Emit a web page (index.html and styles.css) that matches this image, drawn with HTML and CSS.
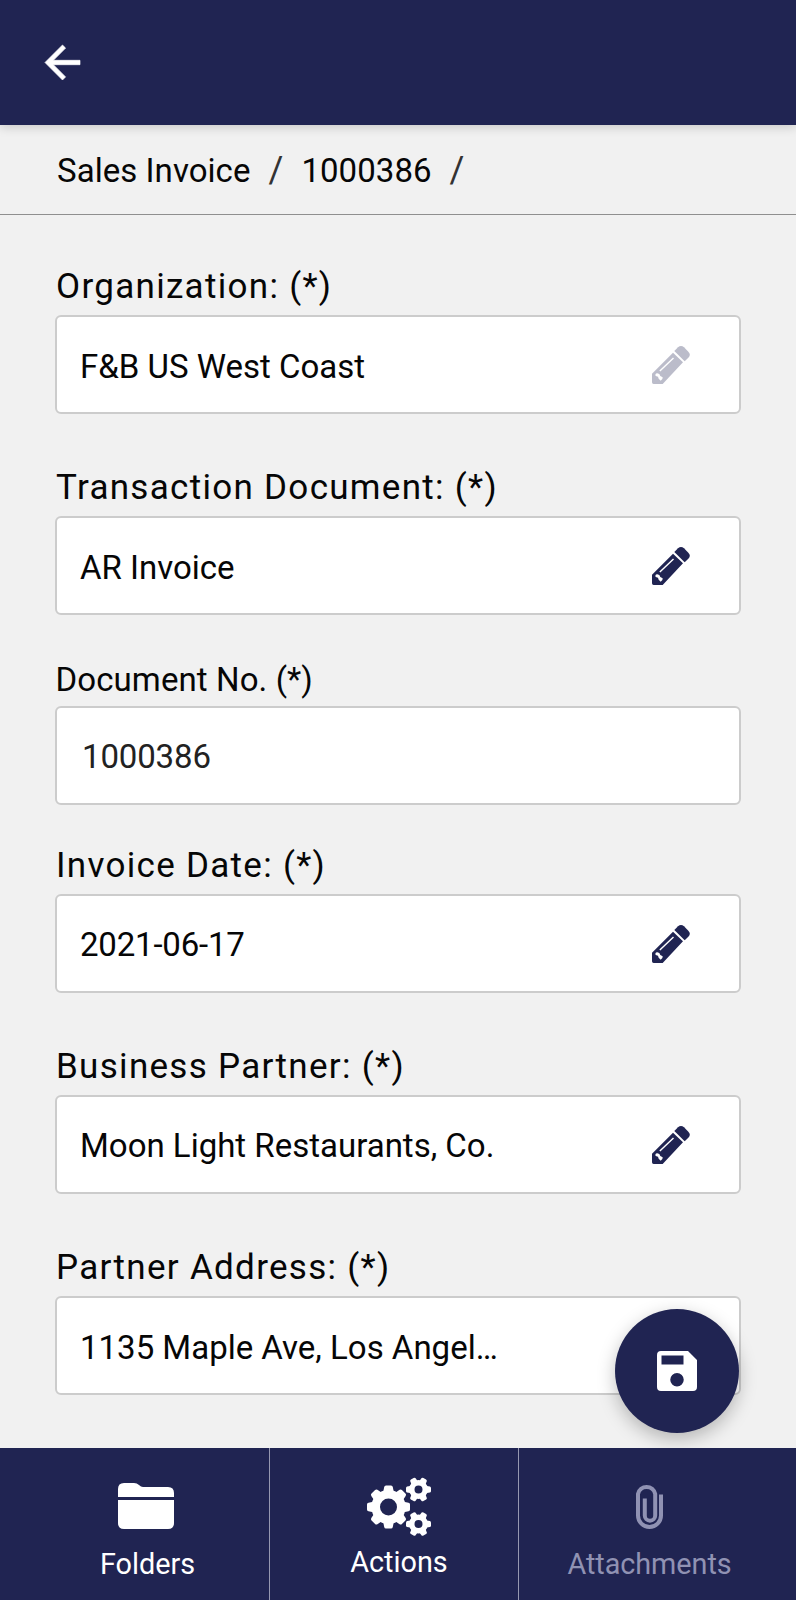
FILE: index.html
```html
<!DOCTYPE html>
<html lang="en">
<head>
<meta charset="utf-8">
<title>Sales Invoice</title>
<link rel="stylesheet" href="styles.css">
</head>
<body>
<svg width="0" height="0" class="defs">
  <symbol id="pencil" viewBox="0 0 114 114">
    <path fill="currentColor" fill-rule="evenodd" d="M0 83L63 20L93 49L32 114H5Q0 114 0 109ZM22 73.500L25 76.500L66 37.500L63 34.500ZM10 86Q11 82 16 82L22 84L25 90L32 94Q33 102 26 104L20 98L18 92L11 90Z"/>
    <path fill="currentColor" d="M67 15L78 4Q87-4 96 4L109 17Q118 26 109 35L98 46Z"/>
  </symbol>
</svg>
<div class="screen">
  <header class="topbar">
    <svg class="back" viewBox="4 4 16 16"><path fill="#fff" stroke="#fff" stroke-width=".3" d="M20 11H7.83l5.59-5.59L12 4l-8 8 8 8 1.41-1.41L7.83 13H20v-2z"/></svg>
  </header>
  <nav class="crumbs"><span>Sales Invoice</span><span class="slash">/</span><span>1000386</span><span class="slash">/</span></nav>
  <main class="form">
    <section class="field">
      <label class="label">Organization: (*)</label>
      <div class="box"><span class="value">F&amp;B US West Coast</span><svg class="edit muted"><use href="#pencil"/></svg></div>
    </section>
    <section class="field">
      <label class="label">Transaction Document: (*)</label>
      <div class="box"><span class="value">AR Invoice</span><svg class="edit"><use href="#pencil"/></svg></div>
    </section>
    <section class="field docno">
      <label class="label plain">Document No. (*)</label>
      <div class="box"><span class="value typed">1000386</span></div>
    </section>
    <section class="field">
      <label class="label">Invoice Date: (*)</label>
      <div class="box"><span class="value date">2021-06-17</span><svg class="edit"><use href="#pencil"/></svg></div>
    </section>
    <section class="field">
      <label class="label">Business Partner: (*)</label>
      <div class="box"><span class="value">Moon Light Restaurants, Co.</span><svg class="edit"><use href="#pencil"/></svg></div>
    </section>
    <section class="field">
      <label class="label">Partner Address: (*)</label>
      <div class="box"><span class="value">1135 Maple Ave, Los Angel…</span></div>
    </section>
  </main>
  <button class="save" aria-label="Save"><svg viewBox="0 0 40 40"><path fill="#fff" fill-rule="evenodd" d="M4 0H31L40 9V36Q40 40 36 40H4Q0 40 0 36V4Q0 0 4 0ZM4.500 4.500V13.500H26.500V4.500ZM20 22A6.500 6.500 0 1 0 20 35.500A6.500 6.500 0 1 0 20 22Z"/></svg></button>
  <footer class="tabs">
    <div class="tab folders">
      <svg class="icon" viewBox="0 0 56 46"><path fill="#fff" d="M0 14V6Q0 0 6 0H16Q19 0 21 2T25 4H50Q56 4 56 10V14ZM0 17H56V40Q56 46 50 46H6Q0 46 0 40Z"/></svg>
      <span>Folders</span>
    </div>
    <div class="tab actions">
      <svg class="icon" viewBox="0 0 64 60">
        <g fill="none" stroke="#fff">
          <circle cx="21.500" cy="30" r="12.800" stroke-width="8.600"/>
          <circle cx="51.500" cy="12.500" r="6.700" stroke-width="5.400"/>
          <circle cx="51.500" cy="47" r="6.700" stroke-width="5.400"/>
        </g>
        <g fill="#fff">
          <g id="big"><path id="t" d="M16 16L17.200 10Q17.500 8.500 19 8.500H24Q25.500 8.500 25.800 10L27 16Z"/>
          <use href="#t" transform="rotate(45 21.500 30)"/><use href="#t" transform="rotate(90 21.500 30)"/><use href="#t" transform="rotate(135 21.500 30)"/><use href="#t" transform="rotate(180 21.500 30)"/><use href="#t" transform="rotate(225 21.500 30)"/><use href="#t" transform="rotate(270 21.500 30)"/><use href="#t" transform="rotate(315 21.500 30)"/></g>
          <g id="small"><path id="s" d="M58 8.800L63 9.500Q64 10 64 11V14Q64 15 63 15.500L58 16.200Z"/>
          <use href="#s" transform="rotate(60 51.500 12.500)"/><use href="#s" transform="rotate(120 51.500 12.500)"/><use href="#s" transform="rotate(180 51.500 12.500)"/><use href="#s" transform="rotate(240 51.500 12.500)"/><use href="#s" transform="rotate(300 51.500 12.500)"/></g>
          <use href="#small" y="34.500"/>
        </g>
      </svg>
      <span>Actions</span>
    </div>
    <div class="tab attach">
      <svg class="icon" viewBox="0 0 27 46"><path fill="none" stroke="currentColor" stroke-width="4" d="M25 11.500V32.500A11.500 11.500 0 0 1 2 32.500V11A8.800 9 0 0 1 19.200 11V32.500A5.200 5.200 0 0 1 8.800 32.500V15.500"/></svg>
      <span>Attachments</span>
    </div>
  </footer>
</div>
</body>
</html>
```
FILE: styles.css
```css
* { box-sizing: border-box; }
body { margin: 0; background: #f1f1f1; font-family: Roboto, sans-serif; color: #060606; }
.defs { position: absolute; }
.screen { position: relative; width: 796px; height: 1600px; display: flex; flex-direction: column; overflow: hidden; }
.topbar { flex: none; height: 125px; background: #202452; padding: 45px 0 0 45px; box-shadow: 0 2px 10px rgba(0,0,0,.18); }
.back { display: block; width: 35px; height: 35px; overflow: visible; }
.crumbs { flex: none; height: 90px; border-bottom: 1px solid #8f8f8f; padding: 0 0 0 57px; font-size: 33px; line-height: 91px; display: flex; letter-spacing: .05px; }
.slash { color: #333; margin: 0 18px; font-size: 36px; }
.form { flex: 1; padding: 51px 55px 0; }
.field { height: 201.300px; }
.field.docno { height: 184.500px; margin-top: -8.500px; }
.label { display: block; height: 49px; padding-left: 1px; font-size: 35px; line-height: 42px; letter-spacing: 1.300px; white-space: nowrap; }
.docno .label { font-size: 33px; letter-spacing: .1px; height: 45.500px; line-height: 40px; padding-left: .5px; }
.box { width: 685.500px; height: 99px; background: #fff; border: 2px solid #ccc; border-radius: 6px; padding: 4px 48.500px 0 23px; display: flex; align-items: center; justify-content: space-between; }
.value { font-size: 33px; line-height: 40px; white-space: nowrap; }
.typed { color: #222; padding-left: 2px; letter-spacing: -.15px; }
.date { letter-spacing: -.2px; }
.edit { width: 38px; height: 38px; color: #202452; margin-bottom: 3px; }
.muted { opacity: .3; }
.save { position: absolute; left: 615px; top: 1308.500px; width: 124px; height: 124px; border: 0; padding: 0; border-radius: 50%; background: #202452; box-shadow: 0 6px 18px rgba(0,0,0,.25); display: grid; place-items: center; }
.save svg { width: 40px; height: 40px; }
.tabs { position: relative; flex: none; height: 152px; background: #202452; display: flex; color: #fff; font-size: 28.800px; line-height: 34px; }
.tab { display: flex; flex-direction: column; align-items: center; border-right: 1px solid #9698b0; }
.tab:last-child { border: 0; }
.folders { width: 270px; padding: 35px 0 0 26px; }
.folders .icon { width: 56px; height: 46px; margin: 0 3px 18px 0; }
.actions { width: 249px; padding: 29px 0 0 10px; }
.actions .icon { width: 64px; height: 60px; margin: 0 1px 8px 0; }
.attach { flex: 1; padding: 35px 16px 0 0; color: #9092b3; }
.attach .icon { width: 27px; height: 46px; margin-bottom: 18px; }
.attach span { letter-spacing: -.05px; }
```
